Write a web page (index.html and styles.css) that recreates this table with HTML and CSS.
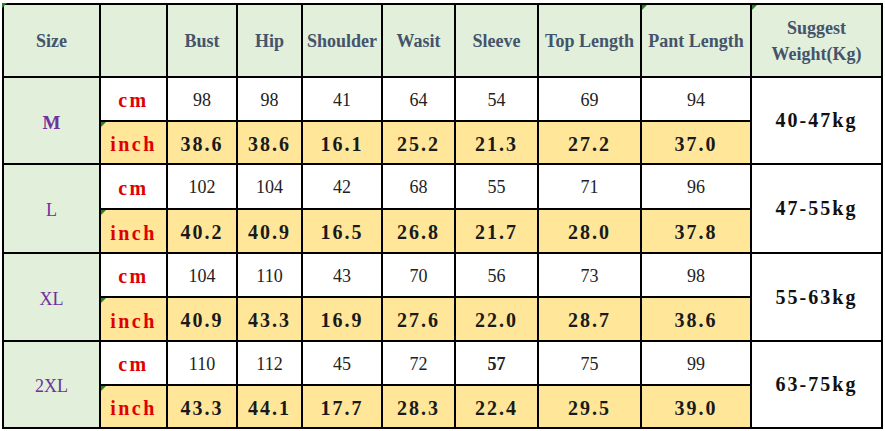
FILE: index.html
```html
<!DOCTYPE html>
<html>
<head>
<meta charset="utf-8">
<link rel="stylesheet" href="styles.css">
</head>
<body>
<div class="chart">
  <div class="cell head tri tri-out">Size</div>
  <div class="cell head"></div>
  <div class="cell head">Bust</div>
  <div class="cell head">Hip</div>
  <div class="cell head">Shoulder</div>
  <div class="cell head">Wasit</div>
  <div class="cell head">Sleeve</div>
  <div class="cell head">Top Length</div>
  <div class="cell head tri">Pant Length</div>
  <div class="cell head tri">Suggest<br>Weight(Kg)</div>

  <div class="cell size bold-size">M</div>
  <div class="cell unit">cm</div>
  <div class="cell v">98</div><div class="cell v">98</div><div class="cell v">41</div><div class="cell v">64</div><div class="cell v">54</div><div class="cell v">69</div><div class="cell v">94</div>
  <div class="cell wt">40-47kg</div>
  <div class="cell unit inch tri">inch</div>
  <div class="cell vi">38.6</div><div class="cell vi">38.6</div><div class="cell vi">16.1</div><div class="cell vi">25.2</div><div class="cell vi">21.3</div><div class="cell vi">27.2</div><div class="cell vi">37.0</div>

  <div class="cell size">L</div>
  <div class="cell unit">cm</div>
  <div class="cell v">102</div><div class="cell v">104</div><div class="cell v">42</div><div class="cell v">68</div><div class="cell v">55</div><div class="cell v">71</div><div class="cell v">96</div>
  <div class="cell wt">47-55kg</div>
  <div class="cell unit inch tri">inch</div>
  <div class="cell vi">40.2</div><div class="cell vi">40.9</div><div class="cell vi">16.5</div><div class="cell vi">26.8</div><div class="cell vi">21.7</div><div class="cell vi">28.0</div><div class="cell vi">37.8</div>

  <div class="cell size">XL</div>
  <div class="cell unit">cm</div>
  <div class="cell v">104</div><div class="cell v">110</div><div class="cell v">43</div><div class="cell v">70</div><div class="cell v">56</div><div class="cell v">73</div><div class="cell v">98</div>
  <div class="cell wt">55-63kg</div>
  <div class="cell unit inch tri">inch</div>
  <div class="cell vi">40.9</div><div class="cell vi">43.3</div><div class="cell vi">16.9</div><div class="cell vi">27.6</div><div class="cell vi">22.0</div><div class="cell vi">28.7</div><div class="cell vi">38.6</div>

  <div class="cell size">2XL</div>
  <div class="cell unit">cm</div>
  <div class="cell v">110</div><div class="cell v">112</div><div class="cell v">45</div><div class="cell v">72</div><div class="cell v bold-v">57</div><div class="cell v">75</div><div class="cell v">99</div>
  <div class="cell wt">63-75kg</div>
  <div class="cell unit inch tri">inch</div>
  <div class="cell vi">43.3</div><div class="cell vi">44.1</div><div class="cell vi">17.7</div><div class="cell vi">28.3</div><div class="cell vi">22.4</div><div class="cell vi">29.5</div><div class="cell vi">39.0</div>
</div>
</body>
</html>
```

FILE: styles.css
```css
html, body {
  margin: 0;
  background: #ffffff;
}
body {
  padding: 3px 0 0 2px;
}
.chart {
  display: inline-grid;
  background: #000000;
  padding: 2px;
  gap: 2px;
  grid-template-columns: 95px 65px 68px 63px 78px 71px 81px 101px 108px 129px;
  grid-template-rows: 71px 42px 41px 43px 42px 42px 42px 42px 41px;
}
.cell {
  position: relative;
  display: flex;
  align-items: center;
  justify-content: center;
  text-align: center;
  background: #ffffff;
  font-family: "Liberation Serif", "Times New Roman", serif;
  color: #222222;
}
.head {
  background: #e2efda;
  color: #44546a;
  font-weight: bold;
  font-size: 18px;
  line-height: 26px;
}
.size {
  grid-row: span 2;
  background: #e2efda;
  color: #7030a0;
  font-size: 18px;
  padding-top: 4px;
}
.bold-size {
  font-weight: bold;
  font-size: 19px;
}
.unit {
  color: #e00000;
  font-weight: bold;
  font-size: 20px;
  letter-spacing: 2.5px;
  padding-top: 3px;
}
.inch {
  background: #ffe699;
  padding-top: 4px;
}
.v {
  font-size: 18px;
  padding-top: 2px;
}
.bold-v {
  font-weight: bold;
}
.vi {
  background: #ffe699;
  font-weight: bold;
  font-size: 20px;
  letter-spacing: 2px;
  color: #1a1a1a;
  padding-top: 3px;
}
.wt {
  grid-row: span 2;
  font-weight: bold;
  font-size: 20px;
  letter-spacing: 2px;
  color: #111111;
}
.tri::before {
  content: "";
  position: absolute;
  top: 0;
  left: 0;
  border-top: 5px solid #2f7d32;
  border-right: 5px solid transparent;
}
.tri-out::before {
  top: -2px;
  left: -2px;
}
```
